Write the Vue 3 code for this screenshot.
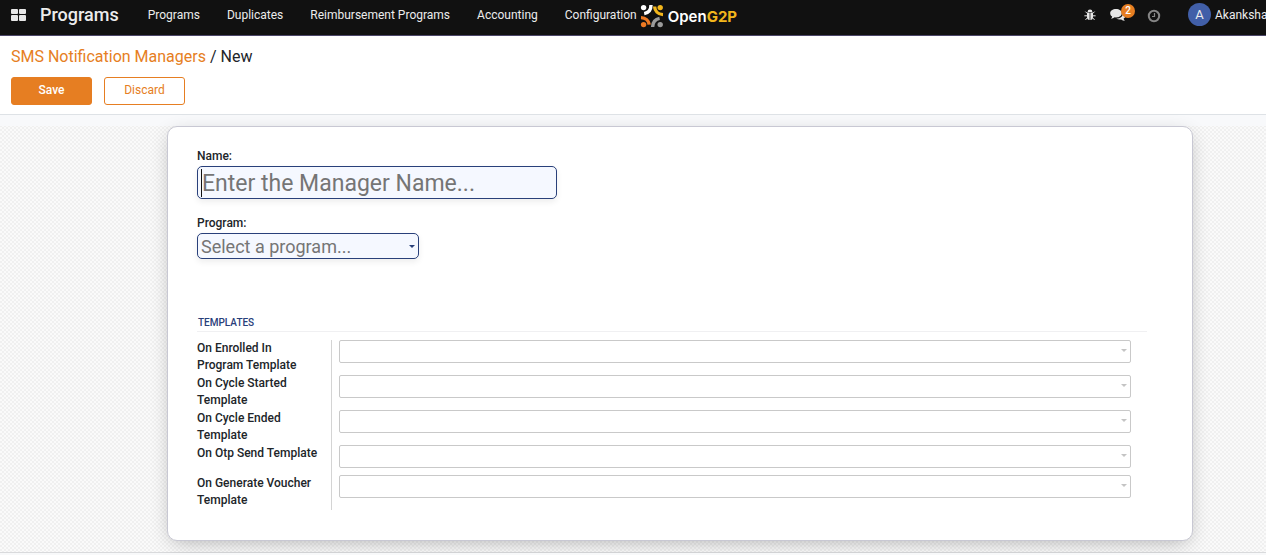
<script setup>
import { ref } from 'vue'

const menus = ['Programs', 'Duplicates', 'Reimbursement Programs', 'Accounting', 'Configuration']
const name = ref('')
const program = ref('')
const templates = ref([
  { id: 'enrolled', label: 'On Enrolled In Program Template', value: '' },
  { id: 'cycle-started', label: 'On Cycle Started Template', value: '' },
  { id: 'cycle-ended', label: 'On Cycle Ended Template', value: '' },
  { id: 'otp', label: 'On Otp Send Template', value: '' },
  { id: 'voucher', label: 'On Generate Voucher Template', value: '' },
])
</script>

<template>
  <div class="page">
    <header class="navbar">
      <button class="apps" type="button" aria-label="Applications">
        <svg width="16" height="12" viewBox="0 0 16 12" fill="#e8e8e8">
          <rect x="0" y="0" width="7" height="5" rx="1" />
          <rect x="8" y="0" width="7" height="5" rx="1" />
          <rect x="0" y="6" width="7" height="6" rx="1" />
          <rect x="8" y="6" width="7" height="6" rx="1" />
        </svg>
      </button>
      <a class="brand" href="#">Programs</a>
      <nav class="menu">
        <a v-for="item in menus" :key="item" href="#">{{ item }}</a>
      </nav>
      <a class="logo" href="#">
        <svg width="24" height="24" viewBox="0 0 24 24" fill="none">
          <circle cx="3.6" cy="3.6" r="2.7" fill="#fff" />
          <circle cx="20.2" cy="3.6" r="2.7" fill="#f2b61c" />
          <circle cx="3.6" cy="20.6" r="2.7" fill="#ee7a23" />
          <circle cx="20.2" cy="20.6" r="2.7" fill="#9b9b9b" />
          <path d="M11 1C11 5.600 8.500 8.800 4.200 9.600" stroke="#fff" stroke-width="3.400" />
          <path d="M14.600 2.500C14.800 7 18 10.400 23 10.600" stroke="#f2b61c" stroke-width="3.400" />
          <path d="M1 13.600C5.600 13.800 8.800 16.600 9.200 20.600" stroke="#ee7a23" stroke-width="3.400" />
          <path d="M12.600 23C12.800 18.400 15.200 15.200 19.600 14.400" stroke="#9b9b9b" stroke-width="3.400" />
        </svg>
        <span>Open<b>G2P</b></span>
      </a>
      <div class="tray">
        <button type="button" class="bug" aria-label="Debug">
          <svg width="12" height="12" viewBox="0 0 12 12">
            <path d="M3.600 3a2.400 2.400 0 0 1 4.800 0z" fill="#e6e6e6" />
            <path d="M3 3.600h2.600V11C4 11 3 9.700 3 8zM6.400 3.600H9V8c0 1.700-1 3-2.600 3z" fill="#e6e6e6" />
            <path d="M3.400 4.600L1.400 2.600M8.600 4.600l2-2M3.400 6.800H.4M8.600 6.800h3M3.600 8.600L1.500 10.900M8.400 8.600l2.100 2.300" stroke="#e6e6e6" />
          </svg>
        </button>
        <button type="button" class="chat" aria-label="Messages">
          <svg width="16" height="14" viewBox="0 0 16 14" fill="#e6e6e6">
            <path d="M6 1c3.300 0 5.800 1.800 5.800 4.200S9.300 9.400 6 9.400l-1.300-.1C3.600 10.200 2.400 10.700.9 10.800c.7-.6 1.200-1.300 1.300-2.200C.9 7.800.2 6.600.2 5.200.2 2.800 2.700 1 6 1z" />
            <path d="M13 4.400c1.500.8 2.400 2 2.400 3.400 0 1.200-.7 2.200-1.800 3 .2.800.7 1.500 1.300 2-1.500-.1-2.700-.6-3.700-1.400-1.800.3-3.500 0-4.900-.8 3.800.1 6.900-2.200 6.700-6.200z" />
          </svg>
          <span class="badge">2</span>
        </button>
        <button type="button" class="clock" aria-label="Activities">
          <svg width="14" height="14" viewBox="0 0 14 14" fill="none" stroke="#858585">
            <circle cx="7" cy="7" r="5.200" stroke-width="2" />
            <path d="M7.500 4v3.500H5" stroke-width="1.200" />
          </svg>
        </button>
        <button type="button" class="user">
          <span class="avatar">A</span>
          <span>Akanksha</span>
        </button>
      </div>
    </header>

    <section class="control">
      <div class="crumbs"><a href="#">SMS Notification Managers</a> / New</div>
      <div class="actions">
        <button type="button" class="btn primary">Save</button>
        <button type="button" class="btn">Discard</button>
      </div>
    </section>

    <main class="content">
      <form class="sheet" @submit.prevent>
        <label class="title" for="name">Name:</label>
        <div class="name-box">
          <input id="name" v-model="name" type="text" placeholder="Enter the Manager Name..." />
        </div>
        <label class="title" for="program">Program:</label>
        <div class="pick program-box">
          <select id="program" v-model="program">
            <option value="">Select a program...</option>
          </select>
        </div>

        <h2>Templates</h2>
        <div class="group">
          <div v-for="t in templates" :key="t.id" class="row">
            <label :for="t.id">{{ t.label }}</label>
            <div class="cell">
              <div class="pick">
                <select :id="t.id" v-model="t.value">
                  <option value=""></option>
                </select>
              </div>
            </div>
          </div>
        </div>
      </form>
    </main>
  </div>
</template>

<style>
body {
  background: #f8f9fa;
}
</style>

<style scoped>
.page {
  overflow: hidden;
  font-family: Roboto, "Liberation Sans", sans-serif;
  font-size: 12px;
  color: #212529;
}
.page *,
.page *::before,
.page *::after {
  box-sizing: border-box;
}
a {
  color: inherit;
  text-decoration: none;
}
button {
  padding: 0;
  border: 0;
  background: none;
  color: inherit;
  font: inherit;
}
svg {
  display: block;
}
.navbar {
  display: flex;
  align-items: center;
  height: 36px;
  padding: 0 0 6px 11px;
  background: #111;
  border-bottom: 1px solid #4b4668;
  color: #ececec;
  white-space: nowrap;
}
.brand {
  margin-left: 13px;
  font-size: 18px;
  font-weight: 500;
}
.menu {
  display: flex;
  gap: 27px;
  margin-left: 29px;
}
.logo {
  display: flex;
  align-items: center;
  gap: 4px;
  margin: 3px 0 0 3px;
  font-family: Inter, "Open Sans", sans-serif;
  font-size: 15px;
  font-weight: 600;
  color: #fff;
}
.logo b {
  font-weight: 700;
  color: #f2b61c;
}
.tray {
  display: flex;
  align-items: center;
  width: 182px;
  margin-left: auto;
}
.chat {
  position: relative;
  margin-left: 14px;
}
.badge {
  position: absolute;
  left: 11px;
  top: -4px;
  width: 14px;
  border-radius: 7px;
  background: #e67e22;
  color: #fff;
  font-size: 10px;
  font-weight: 500;
  line-height: 14px;
}
.clock {
  margin: 2px 0 0 21px;
}
.user {
  display: flex;
  align-items: center;
  gap: 4px;
  margin-left: 27px;
}
.avatar {
  width: 23px;
  border-radius: 50%;
  background: #415fa8;
  font-size: 13px;
  line-height: 23px;
}
.control {
  height: 79px;
  padding: 10px 11px 0;
  background: #fff;
  border-bottom: 1px solid #dee2e6;
}
.crumbs {
  font-size: 16px;
  line-height: 21px;
}
.crumbs a {
  color: #e67e22;
}
.actions {
  display: flex;
  gap: 12px;
  margin-top: 10px;
}
.btn {
  width: 81px;
  height: 28px;
  padding-bottom: 2px;
  border: 1px solid #e67e22;
  border-radius: 3px;
  background: #fff;
  color: #e67e22;
}
.primary {
  background: #e67e22;
  color: #fff;
  font-weight: 500;
}
.content {
  padding: 11px 73px 11px 167px;
  border-bottom: 1px solid #d9dadc;
  background:
    linear-gradient(#f8f9fb, #f8f9fb) 0 0 / 100% 11px no-repeat,
    repeating-conic-gradient(#f0f0f0 0 25%, #fafafa 0 50%) 0 0 / 4px 4px;
}
.sheet {
  padding: 21px 29px 30px;
  border: 1px solid #c8c8d3;
  border-radius: 10px;
  background: #fff;
  box-shadow: 0 5px 20px -5px rgba(0, 0, 0, 0.3);
}
.title {
  display: block;
  padding-bottom: 2px;
  font-weight: 500;
  line-height: 16px;
}
.name-box {
  position: relative;
  width: 360px;
  margin-bottom: 16px;
}
.name-box::before {
  content: "";
  position: absolute;
  left: 4px;
  top: 3px;
  width: 1px;
  height: 28px;
  background: #111;
}
.name-box input {
  display: block;
  width: 100%;
  height: 33px;
  padding: 2px 4px 0;
  border: 1px solid #29407a;
  border-radius: 5px;
  background: #f5f8ff;
  box-shadow: 0 3px 6px rgba(0, 0, 0, 0.07);
  color: #212529;
  font: 23px Roboto, "Liberation Sans", sans-serif;
  outline: 0;
}
.name-box input::placeholder {
  color: #757575;
}
.pick {
  position: relative;
}
.pick::after {
  content: "";
  position: absolute;
  right: 4px;
  top: 9px;
  border: 3px solid transparent;
  border-top-color: #c4c4c4;
  border-bottom: 0;
  pointer-events: none;
}
.pick select {
  display: block;
  width: 100%;
  height: 23px;
  padding: 0 4px;
  border: 1px solid #c9c9c9;
  border-radius: 2px;
  appearance: none;
  background: #fff;
  color: #757575;
  font: inherit;
}
.program-box {
  width: 222px;
}
.program-box::after {
  top: 12px;
  border-top-color: #29407a;
}
.program-box select {
  height: 26px;
  padding: 0 3px;
  border-color: #29407a;
  border-radius: 5px;
  background: #f5f8ff;
  box-shadow: 0 3px 6px rgba(0, 0, 0, 0.07);
  font-size: 18px;
}
h2 {
  margin: 56px 16px 8px 0;
  padding-left: 1px;
  border-bottom: 1px solid #f0f0f2;
  color: #29407a;
  font-size: 10px;
  font-weight: 500;
  line-height: 16px;
  text-transform: uppercase;
}
.row {
  display: flex;
  min-height: 30px;
}
.row label {
  width: 135px;
  padding: 0 12px 1px 0;
  border-right: 1px solid #d4d4d4;
  font-weight: 500;
  line-height: 17px;
}
.cell {
  flex: 1;
  padding: 0 32px 0 7px;
}
</style>
